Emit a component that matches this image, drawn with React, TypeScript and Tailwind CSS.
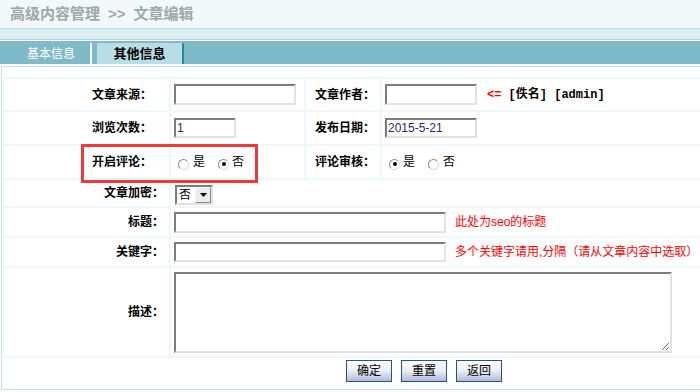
import React from "react";

const inputCls =
  "border-2 border-t-[#7c7c7c] border-l-[#7c7c7c] border-r-[#e2e2e2] border-b-[#e2e2e2] bg-white outline-none px-[1px] text-[12px] text-[#2b1f7a] leading-none font-['Liberation_Sans',sans-serif]";

function Radio({ checked }: { checked?: boolean }) {
  return (
    <span className="inline-flex w-[11px] h-[11px] rounded-full border border-t-[#8c8c8c] border-l-[#8c8c8c] border-r-[#dcdcdc] border-b-[#dcdcdc] bg-white items-center justify-center mt-[4px]">
      {checked && <span className="w-[4px] h-[4px] rounded-full bg-black" />}
    </span>
  );
}

function Label({ children, pr }: { children: React.ReactNode; pr: string }) {
  return (
    <div className={`bg-white flex items-center justify-end font-bold text-[12px] text-black ${pr}`}>
      {children}
    </div>
  );
}

function Btn({ children }: { children: React.ReactNode }) {
  return (
    <div className="w-[46px] h-[22px] border border-[#2d4e8e] bg-linear-to-b from-white via-[#e9edf5] to-[#aebcd9] flex items-center justify-center text-[12px] text-black">
      {children}
    </div>
  );
}

export default function App() {
  return (
    <div className="relative w-[700px] h-[392px] overflow-hidden bg-white font-['Liberation_Sans','Noto_Sans_CJK_SC',sans-serif]">
      {/* header */}
      <div className="h-[28px] bg-[#f3f8fb] flex items-center pl-[10px] text-[15px] font-bold text-[#9ea7aa]">
        高级内容管理<span className="mx-[8px]">&gt;&gt;</span>文章编辑
      </div>
      <div className="h-[1px] bg-[#b7d9e3]" />
      <div className="h-[10px] bg-[#dbedf1]" />
      <div className="h-[1px] bg-[#b5d4dd]" />
      <div className="h-[1px] bg-white" />
      {/* tabs */}
      <div className="h-[23px] bg-[#7fbac9] flex items-end">
        <div className="pl-[27px] h-[21px] flex items-center text-white text-[12px]">基本信息</div>
        <div className="ml-[15px] w-[2px] h-[21px] bg-[#f4fafc]" />
        <div className="ml-[5px] w-[87px] h-[21px] bg-[#b8dde6] border-r-2 border-[#2b86a0] flex items-center justify-center text-[13px] font-bold text-black">
          其他信息
        </div>
      </div>
      <div className="h-[2px] bg-white" />
      {/* form box */}
      <div className="ml-[1px] w-[720px] border-t border-l border-b border-[#c4e2eb] pl-[1px] pt-[10px]">
        <div className="flex flex-col gap-[2px] bg-[#eef7f9] py-[2px] pl-[1px]">
          {/* row 1 */}
          <div className="grid grid-cols-[165px_133px_74px_1fr] gap-x-[2px] h-[31px]">
            <Label pr="pr-[17px]">文章来源：</Label>
            <div className="bg-white flex items-center pl-[3px]">
              <input className={`${inputCls} w-[122px] h-[21px]`} readOnly />
            </div>
            <Label pr="pr-[5px]">文章作者：</Label>
            <div className="bg-white flex items-center pl-[3px]">
              <input className={`${inputCls} w-[92px] h-[21px]`} readOnly />
              <span className="ml-[10px] text-[12px] font-bold font-['Liberation_Mono','Noto_Sans_CJK_SC',monospace] whitespace-pre">
                <span className="text-[#ff0000]">&lt;=</span>
                <span className="text-black"> [佚名] [admin]</span>
              </span>
            </div>
          </div>
          {/* row 2 */}
          <div className="grid grid-cols-[165px_133px_74px_1fr] gap-x-[2px] h-[32px]">
            <Label pr="pr-[17px]">浏览次数：</Label>
            <div className="bg-white flex items-center pl-[3px]">
              <input className={`${inputCls} w-[62px] h-[20px]`} defaultValue="1" readOnly />
            </div>
            <Label pr="pr-[5px]">发布日期：</Label>
            <div className="bg-white flex items-center pl-[3px]">
              <input className={`${inputCls} w-[92px] h-[20px] text-[#1d2457]`} defaultValue="2015-5-21" readOnly />
            </div>
          </div>
          {/* row 3 */}
          <div className="grid grid-cols-[165px_133px_74px_1fr] gap-x-[2px] h-[32px]">
            <Label pr="pr-[17px]">开启评论：</Label>
            <div className="bg-white flex items-center pl-[7px] text-[12px] text-black">
              <Radio />
              <span className="ml-[4px]">是</span>
              <span className="ml-[13px] flex items-center">
                <Radio checked />
              </span>
              <span className="ml-[3px]">否</span>
            </div>
            <Label pr="pr-[5px]">评论审核：</Label>
            <div className="bg-white flex items-center pl-[7px] text-[12px] text-black">
              <Radio checked />
              <span className="ml-[3px]">是</span>
              <span className="ml-[13px] flex items-center">
                <Radio />
              </span>
              <span className="ml-[4px]">否</span>
            </div>
          </div>
          {/* row 4 */}
          <div className="grid grid-cols-[165px_1fr] gap-x-[2px] h-[26px]">
            <Label pr="pr-[5px]">文章加密：</Label>
            <div className="bg-white flex items-center pl-[4px] pt-[4px]">
              <div className="w-[38px] h-[20px] flex border-2 border-t-[#7c7c7c] border-l-[#7c7c7c] border-r-[#e2e2e2] border-b-[#e2e2e2] bg-white">
                <div className="flex-1 flex items-center pl-[2px] text-[12px] text-black">否</div>
                <div className="w-[16px] h-full bg-[#ececec] border border-t-[#f8f8f8] border-l-[#f8f8f8] border-r-[#8a8a8a] border-b-[#8a8a8a] flex items-center justify-center">
                  <svg width="7" height="4" viewBox="0 0 7 4">
                    <path d="M0 0H7L3.5 4Z" fill="#000" />
                  </svg>
                </div>
              </div>
            </div>
          </div>
          {/* row 5 */}
          <div className="grid grid-cols-[165px_1fr] gap-x-[2px] h-[28px]">
            <Label pr="pr-[5px]">标题：</Label>
            <div className="bg-white flex items-center pl-[3px]">
              <input className={`${inputCls} w-[272px] h-[21px]`} readOnly />
              <span className="ml-[9px] text-[12px] text-[#ff0000]">此处为seo的标题</span>
            </div>
          </div>
          {/* row 6 */}
          <div className="grid grid-cols-[165px_1fr] gap-x-[2px] h-[28px]">
            <Label pr="pr-[5px]">关键字：</Label>
            <div className="bg-white flex items-center pl-[3px]">
              <input className={`${inputCls} w-[272px] h-[20px]`} readOnly />
              <span className="ml-[9px] text-[12px] text-[#ff0000] whitespace-nowrap">多个关键字请用,分隔（请从文章内容中选取）</span>
            </div>
          </div>
          {/* row 7 */}
          <div className="grid grid-cols-[165px_1fr] gap-x-[2px] h-[88px]">
            <Label pr="pr-[5px]">描述：</Label>
            <div className="bg-white flex items-center pl-[3px]">
              <textarea className={`${inputCls} w-[498px] h-[81px] block`} readOnly />
            </div>
          </div>
        </div>
        {/* buttons */}
        <div className="h-[31px] bg-white flex items-start pt-[2px] pl-[343px] gap-[9px]">
          <Btn>确定</Btn>
          <Btn>重置</Btn>
          <Btn>返回</Btn>
        </div>
      </div>
      {/* annotation box */}
      <div className="absolute left-[81px] top-[144px] w-[177px] h-[39px] border-[3px] border-[#f03a3a]" />
    </div>
  );
}
